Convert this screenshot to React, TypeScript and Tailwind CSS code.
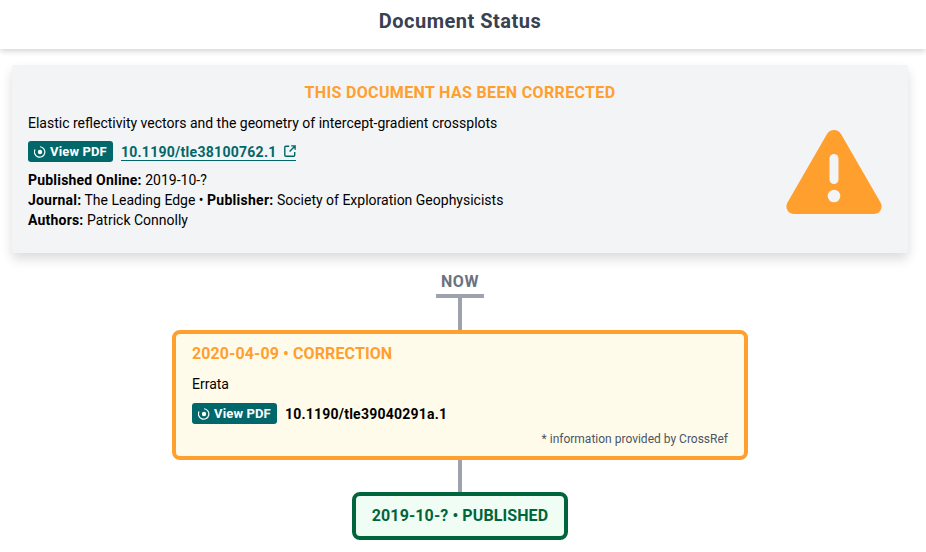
import React from 'react';

const PdfBadge: React.FC = () => (
  <span className="inline-flex items-center gap-[4px] h-[21px] pl-[6px] pr-[6px] rounded-[3px] bg-[#00676b] text-white text-[13px] font-bold tracking-[0.15px] leading-none">
    <svg viewBox="0 0 12 12" className="w-[12px] h-[12px] shrink-0" fill="none">
      <path d="M3.400 1.100 A5.200 5.200 0 1 0 9 1.700" stroke="#fff" strokeWidth="1.200" transform="rotate(-35 6 6)" />
      <circle cx="6" cy="6" r="2.200" fill="#fff" />
    </svg>
    View PDF
  </span>
);

export default function App() {
  return (
    <div className="h-[552px] overflow-hidden bg-white font-['Roboto',sans-serif] text-black">
      {/* Header */}
      <header className="h-[49px] pr-[6px] flex items-center justify-center bg-white shadow-[0_2px_6px_rgba(0,0,0,0.18)]">
        <h1 className="text-[20px] font-bold text-[#374151] tracking-[0.5px] -mt-[7px]">Document Status</h1>
      </header>

      <div className="w-[920px]">
        {/* Document card */}
        <div className="mx-[12px] mt-[16px] h-[188px] bg-[#f3f4f6] shadow-[0_6px_12px_rgba(0,0,0,0.14)] rounded-[2px] px-[16px] pt-[17px] flex flex-col">
          <div className="text-center text-[16px] leading-[22px] font-bold text-[#ff9f2e] tracking-[0.35px]">
            THIS DOCUMENT HAS BEEN CORRECTED
          </div>
          <div className="flex items-start justify-between">
            <div>
              <p className="mt-[9px] text-[14px] leading-[20px]">
                Elastic reflectivity vectors and the geometry of intercept-gradient crossplots
              </p>
              <div className="mt-[8px] flex items-center gap-[8px]">
                <PdfBadge />
                <a className="inline-flex items-center gap-[7px] h-[18px] mt-[1px] border-b-[1.5px] border-[#00676b] text-[14px] font-bold tracking-[0.28px] text-[#00676b] leading-[20px]">
                  10.1190/tle38100762.1
                  <svg viewBox="0 0 12 12" className="w-[12px] h-[12px] -mt-[2px]" fill="none" stroke="#00676b" strokeWidth="1.400">
                    <path d="M5.200 1.300H1.800a1 1 0 0 0-1 1v7.900a1 1 0 0 0 1 1h7.900a1 1 0 0 0 1-1V7" />
                    <path d="M7.200.9h3.900v3.900M10.800 1.200 5.600 6.400" />
                  </svg>
                </a>
              </div>
              <div className="mt-[8px] text-[14px] leading-[20px]">
                <div><b className="tracking-[0.2px]">Published Online:</b> 2019-10-?</div>
                <div><b className="tracking-[0.2px]">Journal:</b> The Leading Edge • <b className="tracking-[0.26px]">Publisher:</b> Society of Exploration Geophysicists</div>
                <div><b className="tracking-[0.2px]">Authors:</b> Patrick Connolly</div>
              </div>
            </div>
            <svg viewBox="0 0 96 84" className="w-[96px] h-[84px] mt-[26px] mr-[10px]">
              <path
                fill="#ff9f2e"
                d="M41 4C44-1.300 52-1.300 55 4L94.500 72.500C97.500 77.800 94 84 88 84H8C2 84-1.500 77.800 1.500 72.500Z"
              />
              <rect x="43.500" y="24" width="9" height="30" rx="4.500" fill="#f3f4f6" />
              <circle cx="48" cy="66" r="6.300" fill="#f3f4f6" />
            </svg>
          </div>
        </div>

        {/* Timeline */}
        <div className="mt-[19px] flex flex-col items-center">
          <div className="text-[16px] leading-[20px] font-bold tracking-[0.5px] text-[#6b7280]">NOW</div>
          <div className="mt-[2px] w-[48px] h-[4px] bg-[#9ca3af]" />
          <div className="w-[4px] h-[32px] bg-[#9ca3af]" />

          <div className="w-[576px] h-[130px] border-[4px] border-[#ff9f2e] rounded-[8px] bg-[#fffbeb] px-[16px] pt-[8px] flex flex-col">
            <div className="text-[16px] leading-[24px] font-bold tracking-[0.1px] text-[#ff9f2e]">2020-04-09 • CORRECTION</div>
            <div className="mt-[8px] text-[14px] leading-[20px]">Errata</div>
            <div className="mt-[9px] flex items-center gap-[8px]">
              <PdfBadge />
              <span className="text-[14px] font-bold tracking-[0.23px] leading-[20px]">10.1190/tle39040291a.1</span>
            </div>
            <div className="mt-[7px] text-right text-[12px] leading-[16px] text-[#4b5563]">* information provided by CrossRef</div>
          </div>

          <div className="w-[4px] h-[32px] bg-[#9ca3af]" />
          <div className="w-[216px] h-[48px] border-[4px] border-[#00653a] rounded-[8px] bg-[#f0fdf4] flex items-center justify-center text-[16px] font-bold tracking-[0.1px] text-[#00653a]">
            2019-10-? • PUBLISHED
          </div>
        </div>
      </div>
    </div>
  );
}
